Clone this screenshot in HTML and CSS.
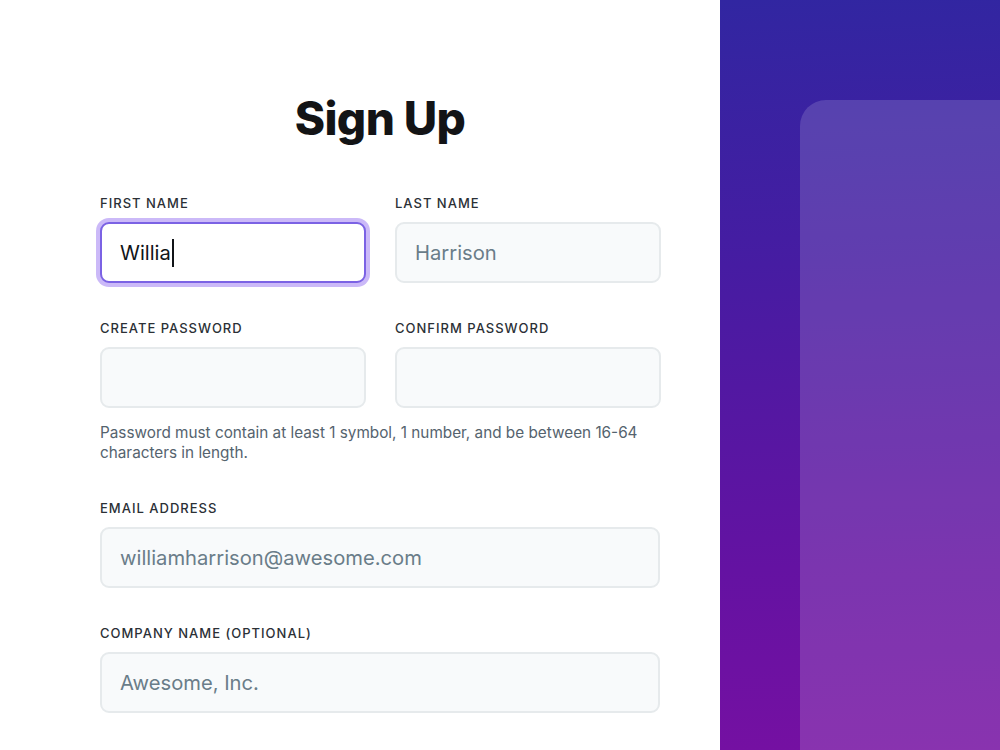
FILE: index.html
```html
<!DOCTYPE html>
<html lang="en">
<head>
<meta charset="utf-8">
<title>Sign Up</title>
<link rel="stylesheet" href="styles.css">
</head>
<body>
<div class="page">
  <main class="form-side">
    <h1 class="title">Sign Up</h1>
    <div class="row">
      <div class="field">
        <label class="label">FIRST NAME</label>
        <div class="input focused"><span class="typed">Willia</span><span class="caret"></span></div>
      </div>
      <div class="field">
        <label class="label">LAST NAME</label>
        <div class="input">Harrison</div>
      </div>
    </div>
    <div class="row">
      <div class="field">
        <label class="label">CREATE PASSWORD</label>
        <div class="input"></div>
      </div>
      <div class="field">
        <label class="label">CONFIRM PASSWORD</label>
        <div class="input"></div>
      </div>
    </div>
    <p class="help">Password must contain at least 1 symbol, 1 number, and be between 16-64 characters in length.</p>
    <div class="field block">
      <label class="label">EMAIL ADDRESS</label>
      <div class="input">williamharrison@awesome.com</div>
    </div>
    <div class="field block">
      <label class="label">COMPANY NAME (OPTIONAL)</label>
      <div class="input">Awesome, Inc.</div>
    </div>
  </main>
  <aside class="art-side">
    <div class="art-card"></div>
  </aside>
</div>
</body>
</html>
```
FILE: styles.css
```css
* { box-sizing: border-box; }
html, body { margin: 0; padding: 0; }
body {
  font-family: Inter, "Noto Sans", "Liberation Sans", sans-serif;
  background: #ffffff;
  color: #111418;
}
.page {
  display: flex;
  width: 1000px;
  height: 750px;
  overflow: hidden;
}
.form-side {
  width: 720px;
  padding: 90px 60px 0 100px;
  display: flex;
  flex-direction: column;
}
.title {
  margin: 0 0 49px 0;
  text-align: center;
  font-size: 46px;
  line-height: 56px;
  font-weight: 800;
  letter-spacing: -0.6px;
  color: #131416;
}
.row {
  display: grid;
  grid-template-columns: 266px 266px;
  column-gap: 29px;
}
.row + .row { margin-top: 37px; }
.field { display: flex; flex-direction: column; }
.field.block { margin-top: 37px; }
.label {
  display: block;
  font-size: 13px;
  line-height: 16px;
  font-weight: 500;
  letter-spacing: 1px;
  color: #2b3036;
  margin-bottom: 11px;
}
.input {
  height: 61px;
  border: 2px solid #e6eaec;
  border-radius: 9px;
  background: #f8fafb;
  padding: 0 18px;
  display: flex;
  align-items: center;
  font-size: 20.2px;
  color: #6a7d89;
}
.input.focused {
  background: #ffffff;
  border-color: #7b62e4;
  box-shadow: 0 0 0 4px #cbb9f8;
  color: #111418;
}
.caret {
  display: inline-block;
  width: 2px;
  height: 28px;
  background: #111418;
  margin-left: 1px;
}
.help {
  margin: 15px 0 0 0;
  font-size: 15.3px;
  line-height: 20px;
  color: #55636e;
  max-width: 560px;
}
.art-side {
  width: 280px;
  height: 750px;
  background: linear-gradient(178deg, #3126a1 0%, #461ca2 35%, #6412a2 75%, #7510a2 100%);
  padding: 100px 0 0 80px;
  display: flex;
}
.art-card {
  flex: 1;
  border-radius: 26px 0 0 0;
  background: rgba(255, 255, 255, 0.15);
}
```
